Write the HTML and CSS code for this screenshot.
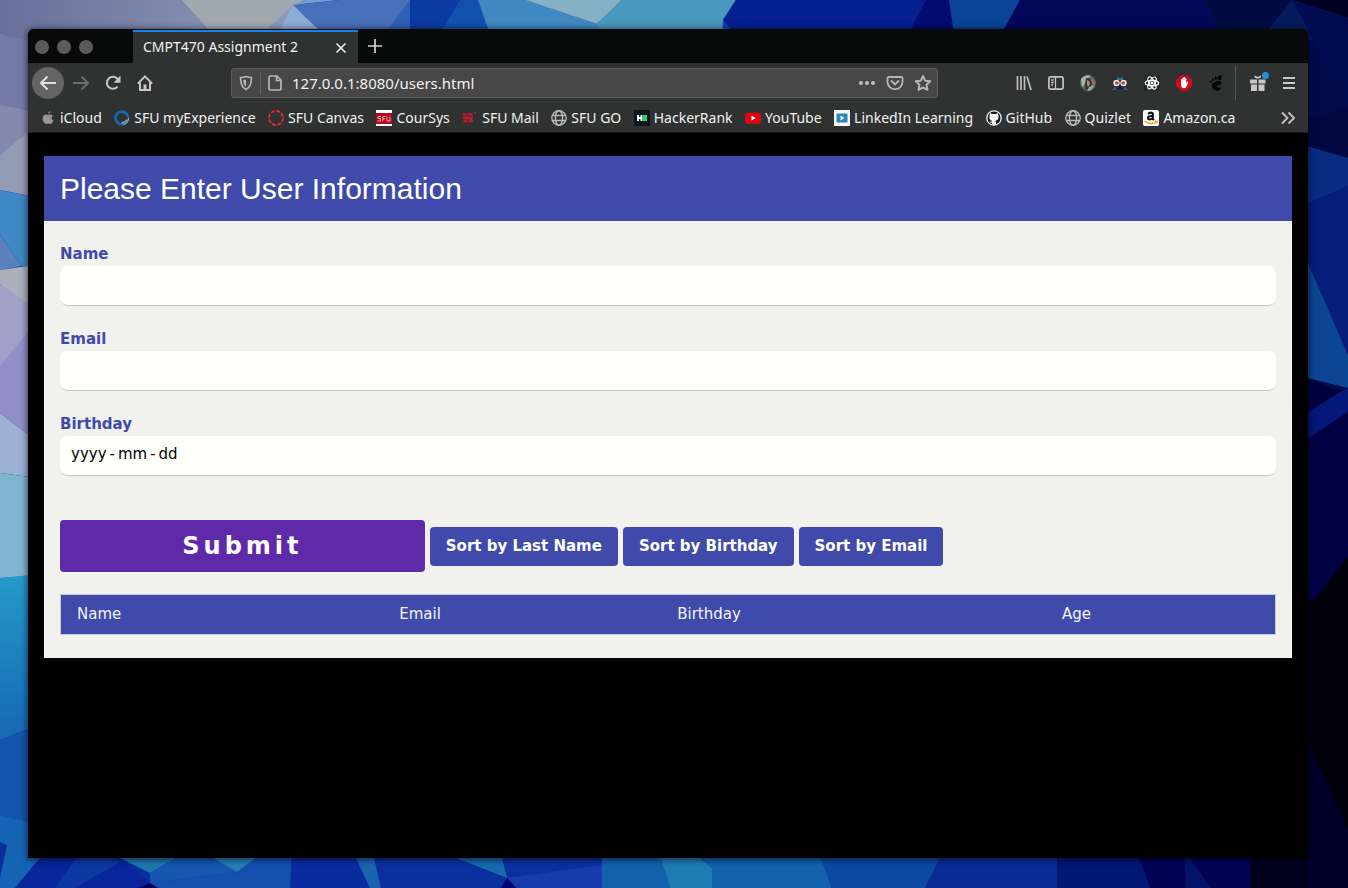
FILE: index.html
```html
<!DOCTYPE html>
<html lang="en">
<head>
<meta charset="utf-8">
<title>CMPT470 Assignment 2</title>
<link rel="stylesheet" href="styles.css">
</head>
<body>
<svg class="wallpaper" viewBox="0 0 1348 888" preserveAspectRatio="none" aria-hidden="true">
  <defs>
    <linearGradient id="lav" x1="0" x2="1" y1="0" y2="0"><stop offset="0" stop-color="#686f9a"/><stop offset="1" stop-color="#8e9cb8"/></linearGradient>
    <linearGradient id="sea" x1="0" x2="0" y1="0" y2="1"><stop offset="0" stop-color="#249aca"/><stop offset="1" stop-color="#1668b2"/></linearGradient>
  </defs>
  <rect width="1348" height="888" fill="#0a2f9e"/>
  <path fill="url(#lav)" d="M0 0H300V60L0 112Z"/>
  <path fill="#7579a6" d="M0 34L40 44V112L0 105Z"/>
  <path fill="#a0a8b0" d="M182 0H305L293 5 255 40H218Z"/>
  <path fill="#8dacd5" d="M293 5L330 40H274Z"/>
  <path fill="#6f9fd6" d="M293 5L340 0H305Z"/>
  <path fill="#486fb9" d="M293 5L340 0H410V40H330Z"/>
  <path fill="#2f5fb5" d="M380 40L410 0V40Z"/>
  <path fill="#0b3aa2" d="M410 0H460L440 40H410Z"/>
  <path fill="#1250ae" d="M460 0H480L492 40H436Z"/>
  <path fill="#3f88c0" d="M478 0H525L597 24V40H492Z"/>
  <path fill="#86b1c5" d="M525 0H622L597 24Z"/>
  <path fill="#4898bd" d="M622 0H736L723 20 730 40H597V24Z"/>
  <path fill="#061f91" d="M736 0H948L938 40H740L723 20Z"/>
  <path fill="#1040a8" d="M723 20L740 40H722Z"/>
  <path fill="#020b70" d="M926 0H949L955 40H905Z"/>
  <path fill="#0b4398" d="M949 0H1020L998 40H955Z"/>
  <path fill="#020858" d="M1020 0H1205L1222 40H998Z"/>
  <path fill="#000a43" d="M1205 0H1292L1260 40H1222Z"/>
  <path fill="#030a4c" d="M1292 0L1348 100V620H1300V40H1260Z"/>
  <path fill="#051b5c" d="M1292 0L1314 40H1260Z"/>
  <path fill="#000020" d="M1292 0H1348V18Z"/>
  <path fill="#000b50" d="M1292 0L1348 18V104Z"/>
  <path fill="#00083f" d="M1300 119L1348 109V158L1300 144Z"/>
  <path fill="#082c80" d="M1300 144L1348 158V186L1300 207Z"/>
  <path fill="#061e77" d="M1300 207L1348 186V355L1300 250Z"/>
  <path fill="#0c4591" d="M1300 245L1348 355V388L1300 376Z"/>
  <path fill="#00003f" d="M1300 376L1342 391 1300 420Z"/>
  <path fill="#04187a" d="M1300 417L1342 391 1348 388V412L1300 444Z"/>
  <path fill="#000043" d="M1300 444L1348 412V557L1314 600H1300Z"/>
  <path fill="#00000a" d="M1300 600H1314L1348 557V888H1300Z"/>
  <path fill="#00002a" d="M1306 738L1348 830V888H1300Z"/>
  <path fill="#8489ad" d="M0 105L40 112V126L0 155Z"/>
  <path fill="#949cb5" d="M0 155L40 122V198L0 190Z"/>
  <path fill="#3e88c4" d="M0 190L40 198V266H22L0 235Z"/>
  <path fill="#5c80be" d="M0 235L22 266 0 270Z"/>
  <path fill="#aab1b8" d="M0 270L40 264V320L0 284Z"/>
  <path fill="#a1a0c8" d="M0 284L30 305V360L0 366Z"/>
  <path fill="#918ec8" d="M0 366L30 330V436L0 413Z"/>
  <path fill="#9db1d5" d="M0 413L30 436V477L0 473Z"/>
  <path fill="#81b4cf" d="M0 473L30 477V576L0 578Z"/>
  <path fill="url(#sea)" d="M0 578L30 575V728L0 740Z"/>
  <path fill="#1156ac" d="M0 740L30 728V822L0 815Z"/>
  <path fill="#1564b3" d="M0 815L30 822 46 850 15 888H0Z"/>
  <path fill="#092d9e" d="M0 842L7 845 0 878Z"/>
  <path fill="#08259b" d="M48 850H112L150 882 146 888H15Z"/>
  <path fill="#1156ad" d="M82 850H105L120 862 75 888H55Z" opacity=".4"/>
  <path fill="#2078b0" d="M104 850H190L150 873Z"/>
  <path fill="#1557af" d="M190 850L150 873 150 883 237 872 205 850Z"/>
  <path fill="#2480b3" d="M200 850H267L237 872Z"/>
  <path fill="#1550ae" d="M150 883L237 872 250 888H158Z"/>
  <path fill="#000060" d="M150 883L158 888H138Z"/>
  <path fill="#1550ae" d="M237 872L267 850H292V888H250Z"/>
  <path fill="#092ba0" d="M292 850H352L370 888H290Z"/>
  <path fill="#1963b1" d="M352 850H372L381 888H370Z"/>
  <path fill="#1869ad" d="M436 850H500L507 878Z"/>
  <path fill="#163bad" d="M507 878L602 865V888H516Z"/>
  <path fill="#000070" d="M507 878L516 888H501Z"/>
  <path fill="#1261ab" d="M602 850H658L670 888H602Z"/>
  <path fill="#1d7db2" d="M658 850H690L712 868V888H670Z"/>
  <path fill="#1262ad" d="M690 850H818L832 888H712V868Z"/>
  <path fill="#0d49a1" d="M818 850H944L925 888H832Z"/>
  <path fill="#092b94" d="M944 850H1057V888H925Z"/>
  <path fill="#031775" d="M1057 850H1136L1150 888H1057Z"/>
  <path fill="#000354" d="M1136 850H1250V888H1150Z"/>
  <path fill="#03126a" d="M1184 850L1211 888H1186Z"/>
  <path fill="#00001c" d="M1250 850H1308V888H1250Z"/>
</svg>

<svg class="sprite" aria-hidden="true">
  <symbol id="globe" viewBox="0 0 16 16"><g fill="none" stroke="#b8b8b8" stroke-width="1.400"><circle cx="8" cy="8" r="7.200"/><ellipse cx="8" cy="8" rx="3.600" ry="7.200"/><path d="M1.500 5.500h13M1.500 10.500h13"/></g></symbol>
</svg>

<div class="window">
  <div class="tabstrip">
    <div class="lights"><i></i><i></i><i></i></div>
    <div class="tab"><span>CMPT470 Assignment 2</span>
      <button class="close" aria-label="Close tab"><svg width="16" height="16" viewBox="0 0 16 16"><path d="M3.500 3.500l9 9M12.500 3.500l-9 9" stroke="#f0f0f0" stroke-width="1.600"/></svg></button>
    </div>
    <button class="newtab" aria-label="New tab"><svg width="16" height="16" viewBox="0 0 16 16"><path d="M8 1v14M1 8h14" stroke="#d4d4d4" stroke-width="1.700"/></svg></button>
  </div>

  <div class="navbar">
    <button class="tool back" aria-label="Back"><svg width="18" height="16" viewBox="0 0 18 16"><path d="M17 8H2M8.500 1.500L2 8l6.500 6.500" fill="none" stroke="#e0e0e0" stroke-width="2"/></svg></button>
    <button class="tool" aria-label="Forward"><svg width="18" height="16" viewBox="0 0 18 16"><path d="M1 8h15M9.500 1.500L16 8l-6.500 6.500" fill="none" stroke="#6c6d6d" stroke-width="2"/></svg></button>
    <button class="tool" aria-label="Reload"><svg width="16" height="16" viewBox="0 0 16 16"><path d="M12.600 11.600A6 6 0 1 1 12.500 4" fill="none" stroke="#c8c8c8" stroke-width="2"/><path d="M15.500 .5v7.200H8.600z" fill="#c8c8c8"/></svg></button>
    <button class="tool" aria-label="Home"><svg width="16" height="16" viewBox="0 0 16 16"><path d="M.8 8.600L8 1.400l7.200 7.200M3 7.500V15h10V7.500" fill="none" stroke="#c8c8c8" stroke-width="2"/><path d="M6.500 15V9.500h3V15z" fill="#c8c8c8"/></svg></button>
    <div class="urlbar">
      <svg width="16" height="16" viewBox="0 0 16 16"><path d="M8 1.500c2 .8 3.800 1 5.500 1C13.500 9 12 12.500 8 14.500 4 12.500 2.500 9 2.500 2.500c1.700 0 3.500-.2 5.500-1z" fill="none" stroke="#b5b5b5" stroke-width="1.600"/><path d="M8 4.500c-.8.300-1.800.4-2.800.5.100 3.300.9 5.300 2.800 6.500z" fill="#b5b5b5"/></svg>
      <i class="rule"></i>
      <svg width="16" height="16" viewBox="0 0 16 16"><path d="M3.500 1H10l4 4v8.500a1.500 1.500 0 0 1-1.500 1.500h-9A1.500 1.500 0 0 1 2 13.500v-11A1.500 1.500 0 0 1 3.500 1zM9.500 1v4.500H14" fill="none" stroke="#b8b8b8" stroke-width="1.700"/></svg>
      <input type="text" aria-label="Address" value="127.0.0.1:8080/users.html">
      <svg width="18" height="16" viewBox="0 0 18 16" fill="#bdbdbd"><circle cx="3" cy="8" r="2"/><circle cx="9" cy="8" r="2"/><circle cx="15" cy="8" r="2"/></svg>
      <svg width="18" height="16" viewBox="0 0 18 16"><path d="M3 2h12a1.500 1.500 0 0 1 1.500 1.500V7a7.500 7.200 0 0 1-15 0V3.500A1.500 1.500 0 0 1 3 2zM5.500 6L9 9.500 12.500 6" fill="none" stroke="#b5b5b5" stroke-width="1.800" stroke-linecap="round"/></svg>
      <svg width="18" height="16" viewBox="0 0 18 16"><path d="M9 1l2.200 4.700 5.100.6-3.800 3.500 1 5.100L9 12.400l-4.500 2.500 1-5.100L1.700 6.300l5.100-.6z" fill="none" stroke="#b8b8b8" stroke-width="1.900" stroke-linejoin="round"/></svg>
    </div>
    <button class="tool" aria-label="Library"><svg width="16" height="16" viewBox="0 0 16 16"><path d="M1.500 1v14M5 1v14M8.500 1v14M11 1.500l4 13.500" fill="none" stroke="#bfbfbf" stroke-width="1.700"/></svg></button>
    <button class="tool" aria-label="Sidebar"><svg width="16" height="16" viewBox="0 0 16 16"><rect x=".9" y="1.900" width="14.200" height="12.200" rx="2" fill="none" stroke="#c4c4c4" stroke-width="1.700"/><path d="M7.500 2v12M3 5h2.800M3 7.500h2.800M3 10h2" stroke="#c4c4c4" stroke-width="1.300"/></svg></button>
    <button class="tool" aria-label="Profile extension"><svg width="16" height="16" viewBox="0 0 16 16"><circle cx="8" cy="8" r="8" fill="#54635a"/><path d="M1 4a8 8 0 0 1 10-3L7 4 5 9 2 12z" fill="#a9b5b0"/><path d="M6 3l4 1 2 4-2 5-4 2-1-6z" fill="#3b2d25"/><path d="M7 5l2 1 1 3-2 3-1-3z" fill="#b79270"/><path d="M11 2l4 4v5l-3-2z" fill="#8b705a"/><path d="M9 12l4-2 1 2-4 4H7z" fill="#8fa3a2"/></svg></button>
    <button class="tool" aria-label="Mask extension"><svg width="16" height="16" viewBox="0 0 16 16"><path d="M2.500 6Q3.500 1 8 1t5.500 5L16 15H0z" fill="#182936"/><path d="M6 1l2 3 2-3 1.500 4h-7z" fill="#337891"/><path d="M3 11l2 4H0zM13 11l-2 4h5z" fill="#355e83"/><circle cx="4.500" cy="8" r="3.200" fill="#efe0d9"/><circle cx="11.500" cy="8" r="3.200" fill="#efe0d9"/><circle cx="4.800" cy="8" r="1.800" fill="#b84c4c"/><circle cx="11.200" cy="8" r="1.800" fill="#b84c4c"/></svg></button>
    <button class="tool" aria-label="React extension"><svg width="16" height="16" viewBox="0 0 16 16"><rect width="16" height="16" fill="#272929"/><g fill="none" stroke="#f5f5f5" stroke-width="1.300"><ellipse cx="8" cy="8" rx="6.700" ry="2.700"/><ellipse cx="8" cy="8" rx="6.700" ry="2.700" transform="rotate(60 8 8)"/><ellipse cx="8" cy="8" rx="6.700" ry="2.700" transform="rotate(120 8 8)"/></g><circle cx="8" cy="8" r="1.400" fill="#fff"/></svg></button>
    <button class="tool" aria-label="Ad blocker"><svg width="16" height="16" viewBox="0 0 16 16"><path d="M5 0h6l5 5v6l-5 5H5l-5-5V5z" fill="#d3061d"/><path d="M5 8V4.500q.7-.8 1.300 0V3q.7-.8 1.300 0V2.300q.7-.8 1.400 0V3.500q.7-.8 1.300 0V8l1-1.200q1.200-.3.900.7L10 12.500q-2.500 1.500-4 0Q4.800 11 5 8z" fill="#fff"/></svg></button>
    <button class="tool" aria-label="GNOME extension"><svg width="16" height="16" viewBox="0 0 16 16" fill="#050505"><ellipse cx="11.700" cy="2.600" rx="2" ry="2.600" transform="rotate(20 11.700 2.600)"/><ellipse cx="7.700" cy="3.200" rx="1.200" ry="1.800"/><ellipse cx="5" cy="4.600" rx="1" ry="1.500"/><ellipse cx="2.900" cy="6.500" rx=".9" ry="1.300"/><path d="M12.300 6C9 5.500 3.500 7.500 3.800 11c.3 3.500 3.700 4.800 6 4.700 2-.2 3.200-1.800 2.800-3.200-.3-1-2.500.7-4-.5-1.500-1.400 4.400-1.600 4.800-4 .1-1-.4-1.800-1.100-2z"/></svg></button>
    <i class="divider"></i>
    <button class="tool gift" aria-label="What's new"><svg width="16" height="16" viewBox="0 0 16 16" fill="#c8c8c8"><path d="M0 4.500h7v4H0zM8.500 4.500h7v4h-7zM1 9.500h6V16H1zM8.500 9.500h6V16h-6z"/><path d="M7.700 3.800L4.500 2.500V.6L7.700 2l3.200-1.400v1.900z"/></svg></button>
    <button class="tool" aria-label="Menu"><svg width="16" height="16" viewBox="0 0 16 16"><path d="M2 3h12M2 8h12M2 13h12" stroke="#c8c8c8" stroke-width="1.800"/></svg></button>
  </div>

  <nav class="bookmarks" aria-label="Bookmarks">
    <a href="#"><svg viewBox="0 0 16 16"><path d="M8 5q2.500-1.500 5 .8-3 2 .3 5Q12 14.500 10 14q-2-1-3.500 0-2 .3-3.700-3.500Q2 6 5 4.700q1.500-.3 3 .3zM8 4Q8 1.500 10.500 1 10.500 3.500 8 4z" fill="#979494"/></svg>iCloud</a>
    <a href="#"><svg viewBox="0 0 16 16"><g fill="none"><path d="M10 13.800A6.300 6.300 0 1 1 14 7" stroke="#1768ac" stroke-width="2.800"/><path d="M14.500 7.500a6.400 6.400 0 0 1-5 7M13 9.500q-1.500 3-5.500 3.500" stroke="#84abcf" stroke-width="1.300"/></g></svg>SFU myExperience</a>
    <a href="#"><svg viewBox="0 0 16 16"><circle cx="8" cy="8" r="7" fill="none" stroke="#df2d37" stroke-width="1.900" stroke-dasharray="3.900 1.600"/></svg>SFU Canvas</a>
    <a href="#"><svg viewBox="0 0 16 16"><path fill="#fff" d="M0 0h16v16H0z"/><path fill="#b10b20" d="M0 3h16v11H0z"/><path d="M5 6.500H2v2h2.500v2.500H1.500M6.800 11.500v-5H9.500M7 8.800h2M11 6.500V11h3V6.500" fill="none" stroke="#f2a5a5"/></svg>CourSys</a>
    <a href="#"><svg viewBox="0 0 16 16"><path d="M1 3h10v10H1z" fill="#7c1d2a"/><path d="M1 4.500h3M6 4.500h4M1 8h10M2 11h3M7 11h4M4 6v1M9 9v1M12 3h2" stroke="#b82436" stroke-width="1.500"/></svg>SFU Mail</a>
    <a href="#"><svg><use href="#globe"/></svg>SFU GO</a>
    <a href="#"><svg viewBox="0 0 16 16"><path fill="#0c1420" d="M0 0h16v16H0z"/><path d="M4 5v6M7.500 5v6M4 8h3.500" stroke="#fff" stroke-width="2"/><path fill="#24d85b" d="M9 5h4v6H9z"/></svg>HackerRank</a>
    <a href="#"><svg viewBox="0 0 16 16"><rect x="0" y="2.500" width="16" height="11.500" rx="3.500" fill="#db0316"/><path d="M6.500 5.800v4.700L10.800 8z" fill="#fff"/></svg>YouTube</a>
    <a href="#"><svg viewBox="0 0 16 16"><path fill="#f7f9fa" d="M0 0h16v16H0z"/><path fill="#2785ba" d="M2.500 3.500h11v9h-11z"/><path fill="#fff" d="M6.500 5.500v5l4-2.500z"/></svg>LinkedIn Learning</a>
    <a href="#"><svg viewBox="0 0 16 16"><circle cx="8" cy="8" r="7.200" fill="#171b1d" stroke="#ededed" stroke-width="1.300"/><path d="M4 3l2 1h4l2-1 .4 2.800q1 4-2.800 5l.4 4H6v-2q-2 .3-2.500-1.500Q5 12.300 6.300 11 2.700 10 3.600 5.800z" fill="#f7f7f7"/></svg>GitHub</a>
    <a href="#"><svg><use href="#globe"/></svg>Quizlet</a>
    <a href="#"><svg viewBox="0 0 16 16"><rect width="16" height="16" rx="2" fill="#fff"/><path d="M5 4Q7.500 1.500 9.800 3.500V10M9.500 6Q4.800 5.500 4.900 8.200 6 11 9.600 8M9.800 9l1.200 1" fill="none" stroke="#080808" stroke-width="2"/><path d="M1.500 11q6 4.500 12 1M12 11.500h2l-.5 2" fill="none" stroke="#ed9a2c" stroke-width="1.400"/></svg>Amazon.ca</a>
    <button class="more" aria-label="More bookmarks"><svg viewBox="0 0 16 16"><path d="M2 2.500L7.500 8 2 13.500M8.500 2.500L14 8l-5.500 5.500" fill="none" stroke="#c0c0c0" stroke-width="1.900"/></svg></button>
  </nav>

  <main class="page">
    <div class="card">
      <header><h1>Please Enter User Information</h1></header>
      <form>
        <div class="field"><label for="name">Name</label><input id="name" type="text"></div>
        <div class="field"><label for="email">Email</label><input id="email" type="text"></div>
        <div class="field"><label for="birthday">Birthday</label><input id="birthday" type="text" value="yyyy&#8201;-&#8201;mm&#8201;-&#8201;dd"></div>
        <div class="actions">
          <button type="submit" class="submit">Submit</button>
          <button type="button" class="sort">Sort by Last Name</button>
          <button type="button" class="sort">Sort by Birthday</button>
          <button type="button" class="sort">Sort by Email</button>
        </div>
      </form>
      <table>
        <thead><tr><th class="c-name">Name</th><th class="c-email">Email</th><th class="c-birthday">Birthday</th><th>Age</th></tr></thead>
      </table>
    </div>
  </main>
</div>
</body>
</html>
```
FILE: styles.css
```css
* { box-sizing: border-box; }

body {
  margin: 0;
  min-height: 100vh;
  padding: 29px 40px 30px 28px;
  display: flex;
  background: #0a2f9e;
  font: 14px/20px "Noto Sans", sans-serif;
  color: #f2f2f2;
}

button { border: 0; padding: 0; background: none; font: inherit; color: inherit; }
svg { display: block; flex: none; }

.wallpaper { position: absolute; inset: 0; width: 100%; height: 100%; z-index: -1; }
.sprite { position: absolute; width: 0; height: 0; }

.window {
  flex: 1;
  min-width: 0;
  display: flex;
  flex-direction: column;
  background: #000;
  border-radius: 6px 6px 0 0;
  box-shadow: 0 1px 6px 1px rgba(0, 0, 20, .6);
}

.tabstrip { display: flex; height: 34px; background: #080a0a; border-radius: 6px 6px 0 0; }
.lights { display: flex; align-items: center; gap: 8px; width: 105px; padding: 2px 0 0 7px; }
.lights i { width: 14px; height: 14px; border-radius: 50%; background: #5c5b59; }
.tab {
  display: flex;
  align-items: center;
  justify-content: space-between;
  width: 225px;
  margin-top: 1px;
  padding: 0 9px 0 10px;
  background: #303131;
  border-top: 2px solid #1584ea;
}
.tab span { padding-bottom: 2px; }
.newtab { padding: 0 9px; }

.navbar { display: flex; align-items: center; height: 40px; padding: 0 3px 0 4px; background: #303131; }
.tool { display: flex; align-items: center; justify-content: center; flex: none; width: 32px; height: 32px; }
.back { margin-right: 1px; border-radius: 50%; background: #636463; }
.urlbar {
  flex: 1;
  display: flex;
  align-items: center;
  gap: 10px;
  height: 30px;
  margin: 0 70px;
  padding: 0 5px 0 6px;
  background: #464746;
  border: 1px solid #5c5d5c;
  border-radius: 3px;
}
.urlbar .rule { width: 1px; height: 22px; margin: 0 -4px; background: #5f605f; }
.urlbar input { flex: 1; min-width: 0; margin-left: -1px; padding: 0; border: 0; background: none; color: #f2f2f2; font: 15px/20px "Noto Sans", sans-serif; }
.divider { width: 1px; height: 34px; margin: 0 6px 0 3px; background: #565756; }
.gift { position: relative; margin-right: -1px; }
.gift::after { content: ""; position: absolute; top: 5px; right: 5px; width: 7px; height: 7px; border-radius: 50%; background: #2090d8; }

.bookmarks { display: flex; align-items: center; justify-content: space-between; height: 30px; padding: 0 12px; background: #303131; border-bottom: 1px solid #1a1b1b; }
.bookmarks a { display: flex; align-items: center; gap: 4px; color: inherit; text-decoration: none; white-space: nowrap; }
.bookmarks svg { width: 16px; height: 16px; }
.more { margin-left: 32px; }

.page { flex: 1; padding: 23px 16px; font: 15px/23px "DejaVu Sans", sans-serif; }
.card { background: #f1f1ee; padding-bottom: 23px; }
.card header { padding: 10px 16px; background: #3f4aaa; }
h1 { margin: 0; font: 30px/45px "Liberation Sans", sans-serif; color: #fff; }
form { padding: 22px 16px; }
.field { margin-bottom: 22px; }
.field label { display: block; font-weight: bold; color: #3f4aaa; }
.field input {
  display: block;
  width: 100%;
  height: 40px;
  padding: 0 11px 3px;
  border: 0;
  border-bottom: 1px solid #c7c7c4;
  border-radius: 8px;
  background: #fffffc;
  color: #000;
  font: inherit;
}
.actions { display: flex; align-items: center; gap: 5px; margin-top: 44px; color: #fff; font-weight: bold; }
.submit { width: 30%; height: 52px; border-radius: 4px; background: #5f2aaa; font-size: 24px; letter-spacing: 4px; }
.sort { height: 39px; padding: 0 16px; border-radius: 4px; background: #3f4aaa; }
table { width: calc(100% - 32px); margin: 0 16px; border: 1px solid #c6c9e0; border-spacing: 0; background: #3f4aaa; color: #f4f4fa; table-layout: fixed; }
th { padding: 8px; font-weight: normal; text-align: left; line-height: 23px; }
th:first-child { padding-left: 16px; }
.c-name { width: 27.2%; }
.c-email { width: 22.9%; }
.c-birthday { width: 31.7%; }
```
